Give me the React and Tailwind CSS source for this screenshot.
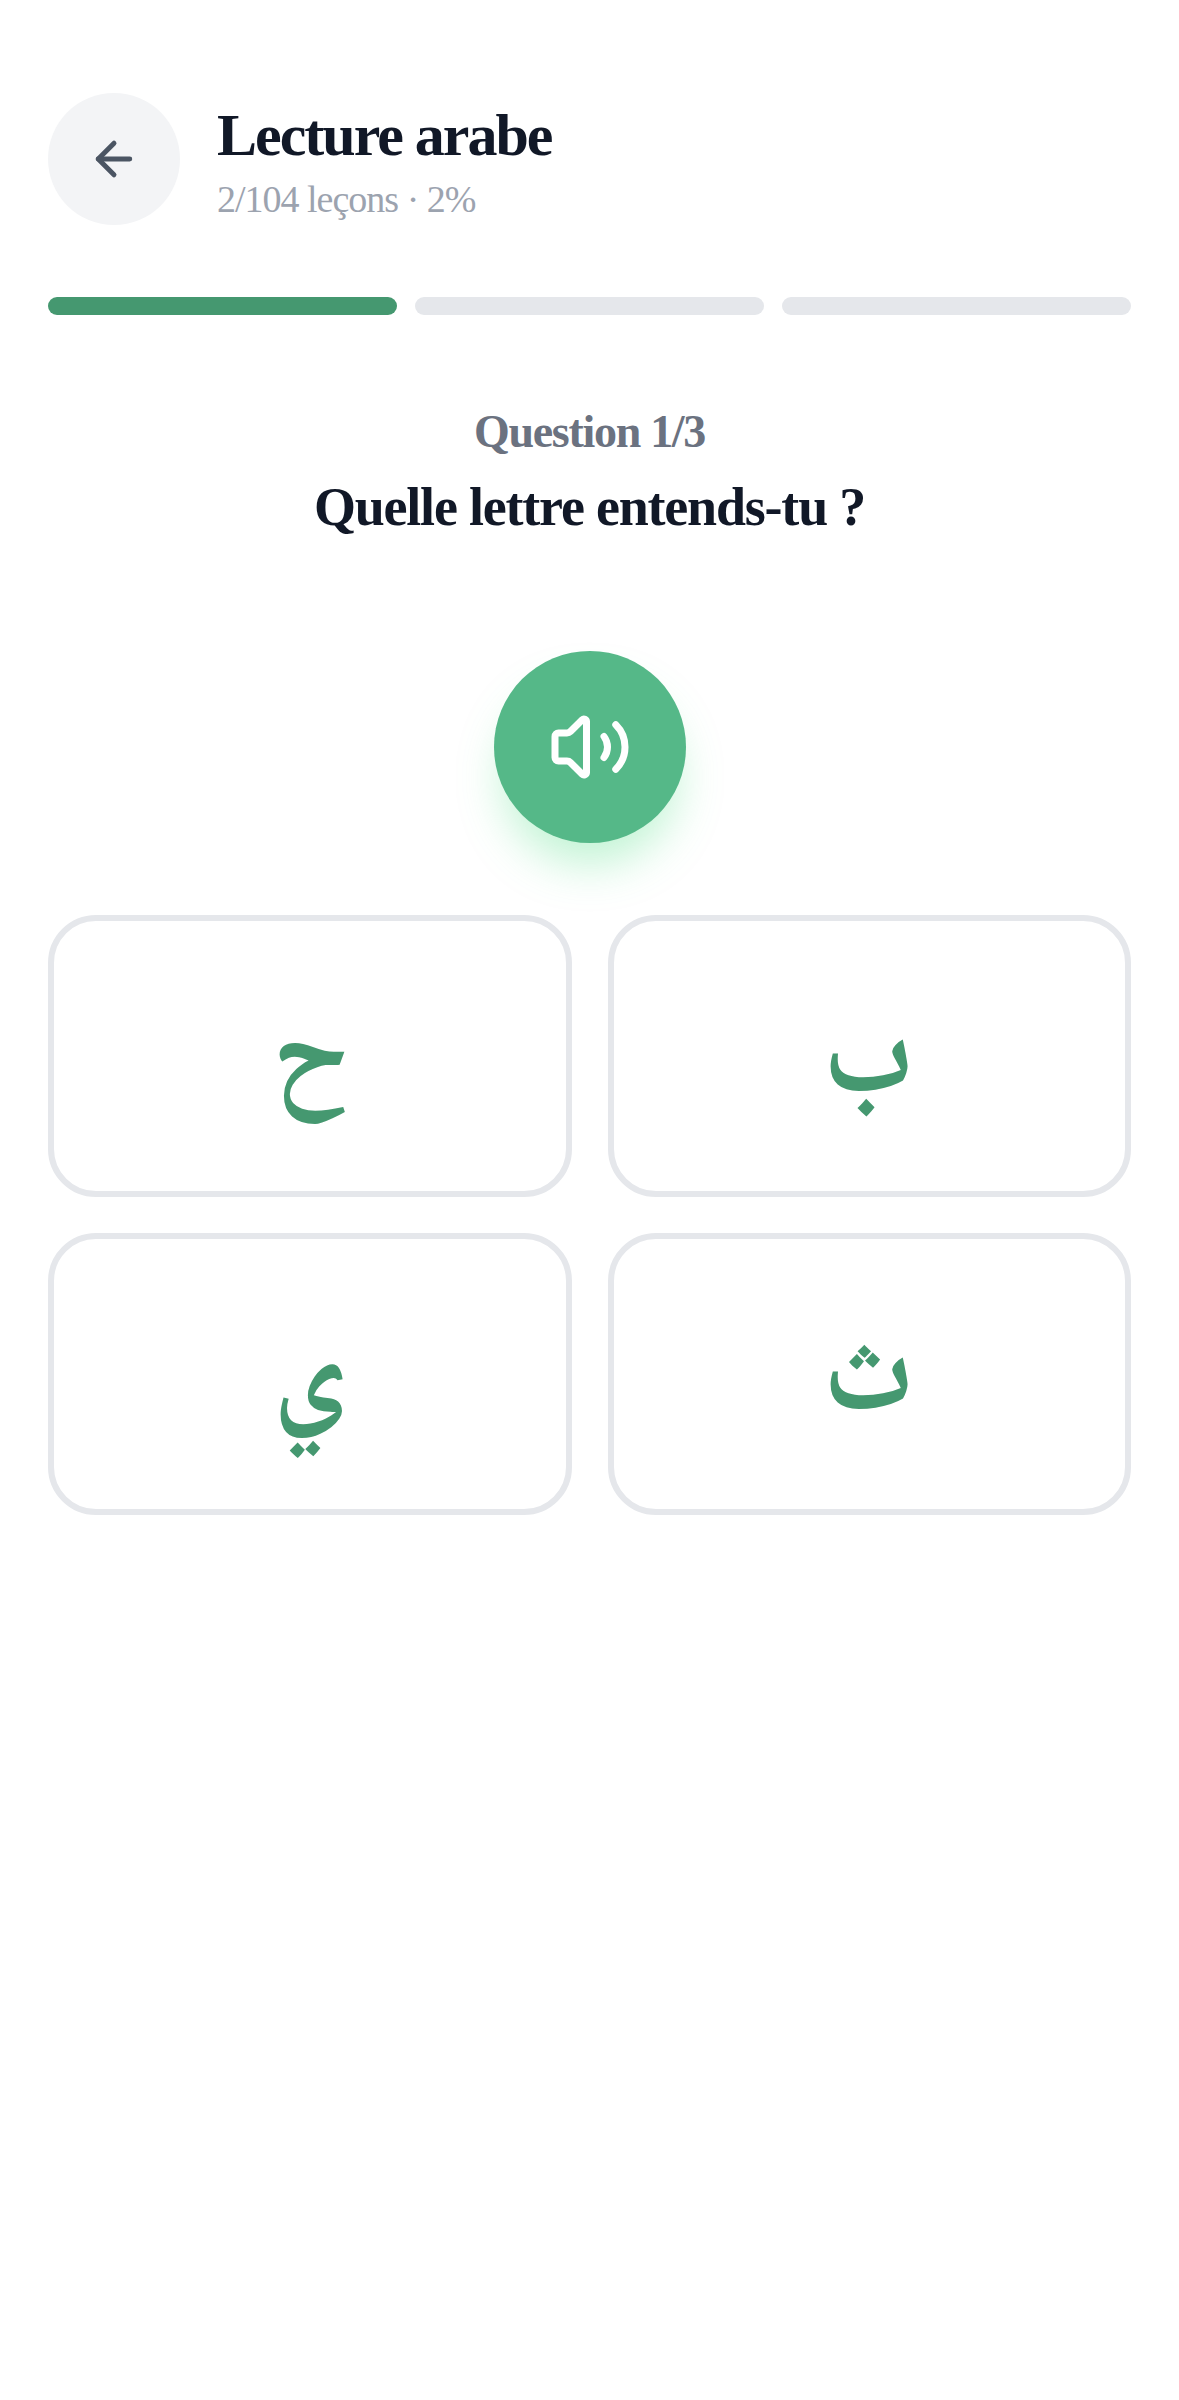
import React from 'react';
import { ArrowLeft, Volume2 } from 'lucide-react';

const letters = ['ح', 'ب', 'ي', 'ث'];

function App() {
  return (
    <div className="min-h-[2400px] bg-white px-12 pt-[93px] font-['Liberation_Serif',serif]">
      {/* Header */}
      <div className="flex items-start gap-[37px]">
        <button className="flex h-[132px] w-[132px] items-center justify-center rounded-full bg-[#f3f4f6]">
          <ArrowLeft size={54} strokeWidth={2.2} className="text-[#4b5563]" />
        </button>
        <div className="flex flex-col pt-[9px]">
          <h1 className="text-[60px] leading-[66px] font-bold tracking-[-2px] text-[#111827]">Lecture arabe</h1>
          <p className="mt-[5px] text-[38px] leading-[52px] tracking-[-1px] text-[#9ca3af]">2/104 leçons · 2%</p>
        </div>
      </div>

      {/* Progress segments */}
      <div className="mt-[72px] flex gap-[18px]">
        <div className="h-[18px] flex-1 rounded-full bg-[#459870]"></div>
        <div className="h-[18px] flex-1 rounded-full bg-[#e5e7eb]"></div>
        <div className="h-[18px] flex-1 rounded-full bg-[#e5e7eb]"></div>
      </div>

      {/* Question */}
      <div className="mt-[87px] flex flex-col items-center">
        <p className="text-[46px] leading-[60px] font-bold tracking-[-1.3px] text-[#6b7280]">Question 1/3</p>
        <h2 className="mt-[9px] text-[54px] leading-[72px] font-bold tracking-[-1.2px] text-[#111827]">Quelle lettre entends-tu ?</h2>
      </div>

      {/* Audio */}
      <div className="mt-[108px] flex justify-center">
        <button className="flex h-[192px] w-[192px] items-center justify-center rounded-full bg-[#55b888] shadow-[0_30px_45px_-9px_rgba(74,222,128,0.35)]">
          <Volume2 size={84} strokeWidth={2} className="text-white" />
        </button>
      </div>

      {/* Answers */}
      <div className="mt-[72px] grid grid-cols-2 gap-[36px]">
        {letters.map((letter) => (
          <button
            key={letter}
            className="flex h-[282px] items-center justify-center rounded-[48px] border-[6px] border-[#e5e7eb] bg-white pt-5 font-['Noto_Naskh_Arabic','Amiri','Liberation_Serif',serif] text-[116px] leading-none font-bold text-[#459870]"
          >
            {letter}
          </button>
        ))}
      </div>
    </div>
  );
}

export default App;
